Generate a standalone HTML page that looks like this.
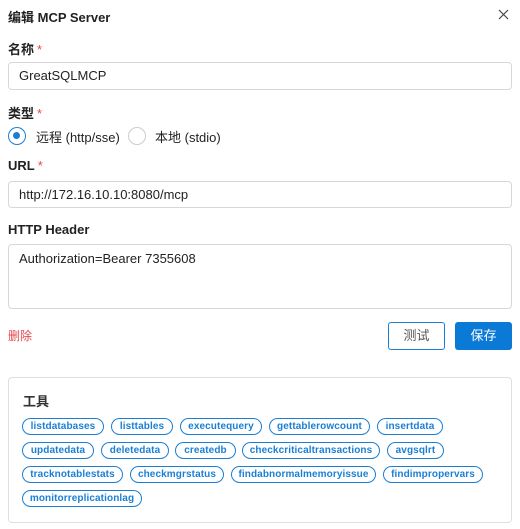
<!DOCTYPE html>
<html><head><meta charset="utf-8"><style>
*{box-sizing:border-box;margin:0;padding:0}
body{width:520px;height:529px;background:#fff;font-family:"Liberation Sans","Noto Sans CJK SC",sans-serif;color:#222;position:relative;overflow:hidden}
.a{position:absolute}
.lbl{font-size:13px;font-weight:bold;color:#222}
.req{color:#e5484d;font-weight:normal;margin-left:3px}
.inp{position:absolute;left:8px;width:504px;border:1px solid #d4d7dc;border-radius:4px;font-size:13px;padding-left:10px;color:#222}
.tag{position:absolute;height:17px;border:1px solid #1a7fd4;border-radius:9px;color:#1a7fd4;font-size:10px;font-weight:bold;text-align:center;line-height:15px;letter-spacing:0.1px;white-space:nowrap}
</style></head><body>
<div class="a lbl" style="left:8px;top:7px;font-size:13px">编辑 MCP Server</div>
<svg class="a" style="left:498px;top:9px" width="11" height="11"><path d="M1 1L10 10M10 1L1 10" stroke="#444" stroke-width="1.2"/></svg>
<div class="a lbl" style="left:8px;top:39px">名称<span class="req">*</span></div>
<div class="inp" style="top:62px;height:28px;line-height:26px">GreatSQLMCP</div>
<div class="a lbl" style="left:8px;top:103px">类型<span class="req">*</span></div>
<div class="a" style="left:8px;top:127px;width:18px;height:18px;border:1.5px solid #1a7fd4;border-radius:50%"><div style="margin:4px;width:7px;height:7px;border-radius:50%;background:#1a7fd4"></div></div>
<div class="a" style="left:36px;top:127px;font-size:13px">远程 (http/sse)</div>
<div class="a" style="left:128px;top:127px;width:18px;height:18px;border:1px solid #ccc;border-radius:50%"></div>
<div class="a" style="left:155px;top:127px;font-size:13px">本地 (stdio)</div>
<div class="a lbl" style="left:8px;top:158px">URL<span class="req">*</span></div>
<div class="inp" style="top:181px;height:27px;line-height:25px">http://172.16.10.10:8080/mcp</div>
<div class="a lbl" style="left:8px;top:222px">HTTP Header</div>
<div class="inp" style="top:244px;height:65px;padding-top:6px">Authorization=Bearer 7355608</div>
<div class="a" style="left:8px;top:327px;font-size:12px;color:#e5484d">删除</div>
<div class="a" style="left:388px;top:322px;width:57px;height:28px;border:1px solid #1a7fd4;border-radius:3px;font-size:13px;color:#555;text-align:center;line-height:26px">测试</div>
<div class="a" style="left:455px;top:322px;width:57px;height:28px;background:#0b7ad6;border-radius:3px;font-size:13px;color:#fff;text-align:center;line-height:28px">保存</div>
<div class="a" style="left:8px;top:377px;width:504px;height:146px;border:1px solid #dcdfe3;border-radius:4px"></div>
<div class="a lbl" style="left:23px;top:391px;color:#333">工具</div>
<div class="tag" style="left:22px;top:418px;width:82px">listdatabases</div>
<div class="tag" style="left:111px;top:418px;width:62px">listtables</div>
<div class="tag" style="left:180px;top:418px;width:82px">executequery</div>
<div class="tag" style="left:269px;top:418px;width:101px">gettablerowcount</div>
<div class="tag" style="left:377px;top:418px;width:66px">insertdata</div>
<div class="tag" style="left:22px;top:442px;width:72px">updatedata</div>
<div class="tag" style="left:101px;top:442px;width:68px">deletedata</div>
<div class="tag" style="left:175px;top:442px;width:61px">createdb</div>
<div class="tag" style="left:242px;top:442px;width:138px">checkcriticaltransactions</div>
<div class="tag" style="left:387px;top:442px;width:57px">avgsqlrt</div>
<div class="tag" style="left:22px;top:466px;width:101px">tracknotablestats</div>
<div class="tag" style="left:130px;top:466px;width:94px">checkmgrstatus</div>
<div class="tag" style="left:231px;top:466px;width:145px">findabnormalmemoryissue</div>
<div class="tag" style="left:383px;top:466px;width:100px">findimpropervars</div>
<div class="tag" style="left:22px;top:490px;width:120px">monitorreplicationlag</div>
</body></html>
